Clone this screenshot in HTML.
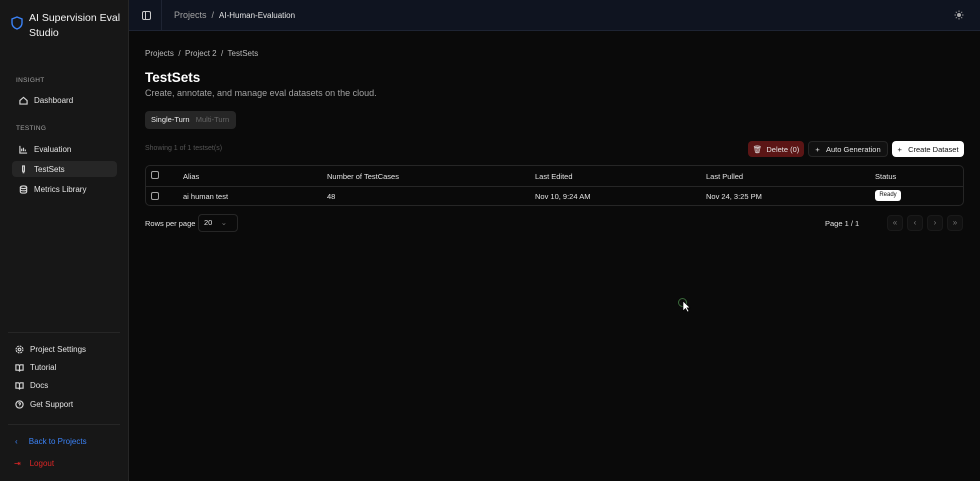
<!DOCTYPE html>
<html><head><meta charset="utf-8"><style>
*{box-sizing:border-box;margin:0;padding:0}
body{width:980px;height:481px;background:#0a0a0a;font-family:"Liberation Sans",sans-serif;color:#e5e5e5;position:relative;overflow:hidden;font-size:8px}
.sb{position:absolute;left:0;top:0;width:129px;height:481px;background:#171717;border-right:1px solid #262626}
.abs{position:absolute;white-space:nowrap}
.top{position:absolute;left:129px;top:0;width:851px;height:31px;background:#0f1420;border-bottom:1px solid #1e2433}
.nav{position:absolute;left:12px;width:105px;height:16px;border-radius:4px;display:flex;align-items:center;padding-left:7px;font-size:8px;color:#e5e5e5;white-space:nowrap}
.nav svg{width:9px;height:9px;margin-right:6px;stroke:#d4d4d4;fill:none;stroke-width:1.3}
.sec{position:absolute;left:16px;font-size:6.5px;color:#a3a3a3;letter-spacing:.3px}
.btn{position:absolute;top:141px;height:16px;border-radius:4px;display:flex;align-items:center;justify-content:center;font-size:7.5px;white-space:nowrap}
.tbl{position:absolute;left:145px;top:165px;width:819px;height:41px;border:1px solid #262626;border-radius:5px}
.cb{position:absolute;width:8px;height:8px;border:1px solid #a3a3a3;border-radius:2px}
.pg{position:absolute;top:215px;width:16px;height:16px;border-radius:4px;background:#111;border:1px solid #1a1a1a;color:#777;font-size:8px;text-align:center;line-height:14px}
</style></head><body>
<div class="sb">
<svg class="abs" style="left:11px;top:16px" width="12" height="14" viewBox="0 0 12 14"><path d="M6 1L11 3v4c0 3-2.3 5-5 6C3.3 12 1 10 1 7V3z" fill="none" stroke="#3b82f6" stroke-width="1.4"/></svg>
<div class="abs" style="left:29px;top:11px;font-size:10.5px;line-height:15px;color:#f5f5f5">AI Supervision Eval<br>Studio</div>
<div class="sec" style="top:77px">INSIGHT</div>
<div class="nav" style="top:92px"><svg viewBox="0 0 10 10"><path d="M1 5L5 1.5 9 5v4H1z"/></svg>Dashboard</div>
<div class="sec" style="top:125px">TESTING</div>
<div class="nav" style="top:141px"><svg viewBox="0 0 10 10"><path d="M1 1v8h8M3 7V4M5 7V3M7 7V5"/></svg>Evaluation</div>
<div class="nav" style="top:161px;background:#262626"><svg viewBox="0 0 10 10"><path d="M4 1h2v6H4zM4 8.5h2"/></svg>TestSets</div>
<div class="nav" style="top:181px"><svg viewBox="0 0 10 10"><ellipse cx="5" cy="2.5" rx="3.5" ry="1.5"/><path d="M1.5 2.5v5c0 1 1.5 1.5 3.5 1.5s3.5-.5 3.5-1.5v-5M1.5 5c0 1 1.5 1.5 3.5 1.5S8.5 6 8.5 5"/></svg>Metrics Library</div>
<div class="abs" style="left:8px;top:332px;width:112px;border-top:1px solid #262626"></div>
<div class="nav" style="top:341px;left:8px"><svg viewBox="0 0 10 10"><circle cx="5" cy="5" r="1.5"/><circle cx="5" cy="5" r="3.8" stroke-dasharray="2 1"/></svg>Project Settings</div>
<div class="nav" style="top:359px;left:8px"><svg viewBox="0 0 10 10"><path d="M1 2h3l1 1 1-1h3v6H6L5 9 4 8H1zM5 3v6"/></svg>Tutorial</div>
<div class="nav" style="top:377px;left:8px"><svg viewBox="0 0 10 10"><path d="M1 2h3l1 1 1-1h3v6H6L5 9 4 8H1zM5 3v6"/></svg>Docs</div>
<div class="nav" style="top:396px;left:8px"><svg viewBox="0 0 10 10"><circle cx="5" cy="5" r="4"/><path d="M4 4a1 1 0 1 1 1.3 1L5 6M5 7.3v.2"/></svg>Get Support</div>
<div class="abs" style="left:8px;top:424px;width:112px;border-top:1px solid #262626"></div>
<div class="abs" style="left:15px;top:437px;color:#3b82f6;font-size:8px">‹&nbsp;&nbsp;&nbsp;&nbsp;&nbsp;Back to Projects</div>
<div class="abs" style="left:14px;top:459px;color:#dc2626;font-size:8px">⇥&nbsp;&nbsp;&nbsp;&nbsp;Logout</div>
</div>
<div class="top">
<svg class="abs" style="left:13px;top:11px" width="9" height="9" viewBox="0 0 9 9"><rect x=".5" y=".5" width="8" height="8" rx="1.5" fill="none" stroke="#ccc"/><path d="M3.5 .5v8" stroke="#ccc"/></svg>
<div class="abs" style="left:32px;top:0;height:31px;border-left:1px solid #1e2433"></div>
<div class="abs" style="left:45px;top:10px;font-size:9px;color:#a3a3a3">Projects &nbsp;/&nbsp; <span style="color:#e5e5e5;font-size:8px">AI-Human-Evaluation</span></div>
<svg class="abs" style="left:825px;top:10px" width="10" height="10" viewBox="0 0 10 10"><circle cx="5" cy="5" r="2" fill="#aaa"/><path d="M5 .5v1.5M5 8v1.5M.5 5H2M8 5h1.5M1.8 1.8l1 1M7.2 7.2l1 1M1.8 8.2l1-1M7.2 2.8l1-1" stroke="#999" stroke-width="1"/></svg>
</div>
<div class="abs" style="left:145px;top:49px;font-size:8px;color:#bbb">Projects &nbsp;/&nbsp; Project 2 &nbsp;/&nbsp; TestSets</div>
<div class="abs" style="left:145px;top:70px;font-size:13.5px;font-weight:bold;color:#fff">TestSets</div>
<div class="abs" style="left:145px;top:88px;font-size:9px;color:#a3a3a3">Create, annotate, and manage eval datasets on the cloud.</div>
<div class="abs" style="left:145px;top:111px;width:91px;height:18px;background:#262626;border-radius:4px;font-size:7.5px;line-height:18px;padding-left:6px;color:#eee">Single-Turn &nbsp;&nbsp;<span style="color:#666">Multi-Turn</span></div>
<div class="abs" style="left:145px;top:145px;font-size:7px;color:#555">Showing 1 of 1 testset(s)</div>
<div class="btn" style="left:748px;width:56px;background:#5b1515;color:#e5e5e5">🗑&nbsp;&nbsp;Delete (0)</div>
<div class="btn" style="left:808px;width:80px;background:#111;border:1px solid #262626;color:#e5e5e5">+&nbsp;&nbsp;&nbsp;Auto Generation</div>
<div class="btn" style="left:892px;width:72px;background:#fff;color:#111">+&nbsp;&nbsp;&nbsp;Create Dataset</div>
<div class="tbl">
<div class="abs" style="left:0;top:20px;width:817px;border-top:1px solid #262626"></div>
<div class="cb" style="left:5px;top:5px"></div><div class="cb" style="left:5px;top:26px"></div>
<div class="abs" style="left:37px;top:6px;font-size:7.5px">Alias</div>
<div class="abs" style="left:181px;top:6px;font-size:7.5px">Number of TestCases</div>
<div class="abs" style="left:389px;top:6px;font-size:7.5px">Last Edited</div>
<div class="abs" style="left:560px;top:6px;font-size:7.5px">Last Pulled</div>
<div class="abs" style="left:729px;top:6px;font-size:7.5px">Status</div>
<div class="abs" style="left:37px;top:26px;font-size:7.5px">ai human test</div>
<div class="abs" style="left:181px;top:26px;font-size:7.5px">48</div>
<div class="abs" style="left:389px;top:26px;font-size:7.5px">Nov 10, 9:24 AM</div>
<div class="abs" style="left:560px;top:26px;font-size:7.5px">Nov 24, 3:25 PM</div>
<div class="abs" style="left:729px;top:24px;width:26px;height:11px;background:#fff;color:#111;border-radius:3px;font-size:6px;text-align:center;line-height:11px">Ready</div>
</div>
<div class="abs" style="left:145px;top:219px;font-size:7.5px">Rows per page</div>
<div class="abs" style="left:198px;top:214px;width:40px;height:18px;border:1px solid #262626;border-radius:4px;font-size:7.5px;line-height:16px;padding-left:5px">20 &nbsp;&nbsp;&nbsp;<span style="color:#777">⌄</span></div>
<div class="abs" style="left:825px;top:219px;font-size:7.5px">Page 1 / 1</div>
<div class="pg" style="left:887px">«</div><div class="pg" style="left:907px">‹</div><div class="pg" style="left:927px">›</div><div class="pg" style="left:947px">»</div>
<div class="abs" style="left:678px;top:298px;width:9px;height:9px;border-radius:50%;border:1px solid #3a6a3a"></div>
<svg class="abs" style="left:682px;top:300px" width="9" height="13" viewBox="0 0 9 13"><path d="M1 1v10l2.5-2.5 2 3.5 1.5-.8-2-3.4H8z" fill="#fff" stroke="#000" stroke-width=".6"/></svg>
</body></html>
